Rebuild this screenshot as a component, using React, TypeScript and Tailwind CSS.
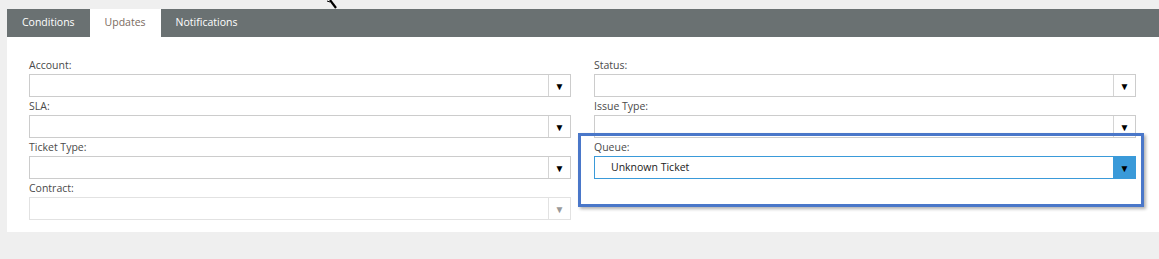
import React from 'react';

interface SelectFieldProps {
  label: string;
  value?: string;
  disabled?: boolean;
  active?: boolean;
}

function SelectField({ label, value, disabled, active }: SelectFieldProps) {
  const border = active ? 'border-[#3a9ad9]' : disabled ? 'border-[#e2e2e2]' : 'border-[#cccccc]';
  return (
    <div className="flex flex-col">
      <label className="h-[18px] text-[10.5px] leading-[18px] text-[#4a4a4a]">{label}</label>
      <div className={`flex h-[23px] border ${border} bg-white`}>
        <div className="flex flex-1 items-center pl-4 text-[10.5px] text-[#222]">{value}</div>
        <div
          className={`flex w-[22px] items-center justify-center border-l ${
            active ? 'border-[#3a9ad9] bg-[#3a9ad9]' : disabled ? 'border-[#e2e2e2]' : 'border-[#d4d4d4]'
          }`}
        >
          <span className={`text-[10px] leading-none ${disabled ? 'text-[#999]' : 'text-black'}`}>▼</span>
        </div>
      </div>
    </div>
  );
}

export default function App() {
  const tabs = ['Conditions', 'Updates', 'Notifications'];
  return (
    <div
      className="relative h-[259px] w-[1159px] overflow-hidden bg-[#efefef] pl-[7px] pt-[9px]"
      style={{ fontFamily: '"Open Sans", "Noto Sans", sans-serif' }}
    >
      {/* mouse pointer poking in from the top */}
      <svg className="absolute left-[326px] top-0" width="14" height="10" viewBox="0 0 14 10">
        <path d="M4 0 L10 8" stroke="#000" strokeWidth="2.2" />
        <path d="M1 1 L4 2" stroke="#000" strokeWidth="1" />
      </svg>

      <div className="flex h-[28px] bg-[#6a7172]">
        {tabs.map((t) => (
          <div
            key={t}
            className={`flex items-center px-[15px] text-[10.5px] ${
              t === 'Updates' ? 'bg-white text-[#7a6a60]' : 'text-white'
            }`}
          >
            {t}
          </div>
        ))}
      </div>

      <div className="h-[195px] bg-white pl-[22px] pt-[19px]">
        <div className="grid grid-cols-[542px_542px_542px] gap-x-[23px]">
          <div className="flex flex-col">
            <SelectField label="Account:" />
            <SelectField label="SLA:" />
            <SelectField label="Ticket Type:" />
            <SelectField label="Contract:" disabled />
          </div>
          <div className="flex flex-col">
            <SelectField label="Status:" />
            <SelectField label="Issue Type:" />
            <SelectField label="Queue:" value="Unknown Ticket" active />
          </div>
          <div className="flex flex-col">
            <div className="h-[18px]" />
            <div className="h-[23px] border border-[#cccccc]" />
            <div className="h-[18px]" />
            <div className="h-[23px] border border-[#cccccc]" />
            <div className="h-[18px]" />
            <div className="h-[23px] border border-[#cccccc]" />
          </div>
        </div>
      </div>

      <div className="pointer-events-none absolute left-[578px] top-[133px] h-[74px] w-[566px] border-[3px] border-[#4a77c9] shadow-[2px_2px_3px_rgba(0,0,0,0.3)]" />
    </div>
  );
}
